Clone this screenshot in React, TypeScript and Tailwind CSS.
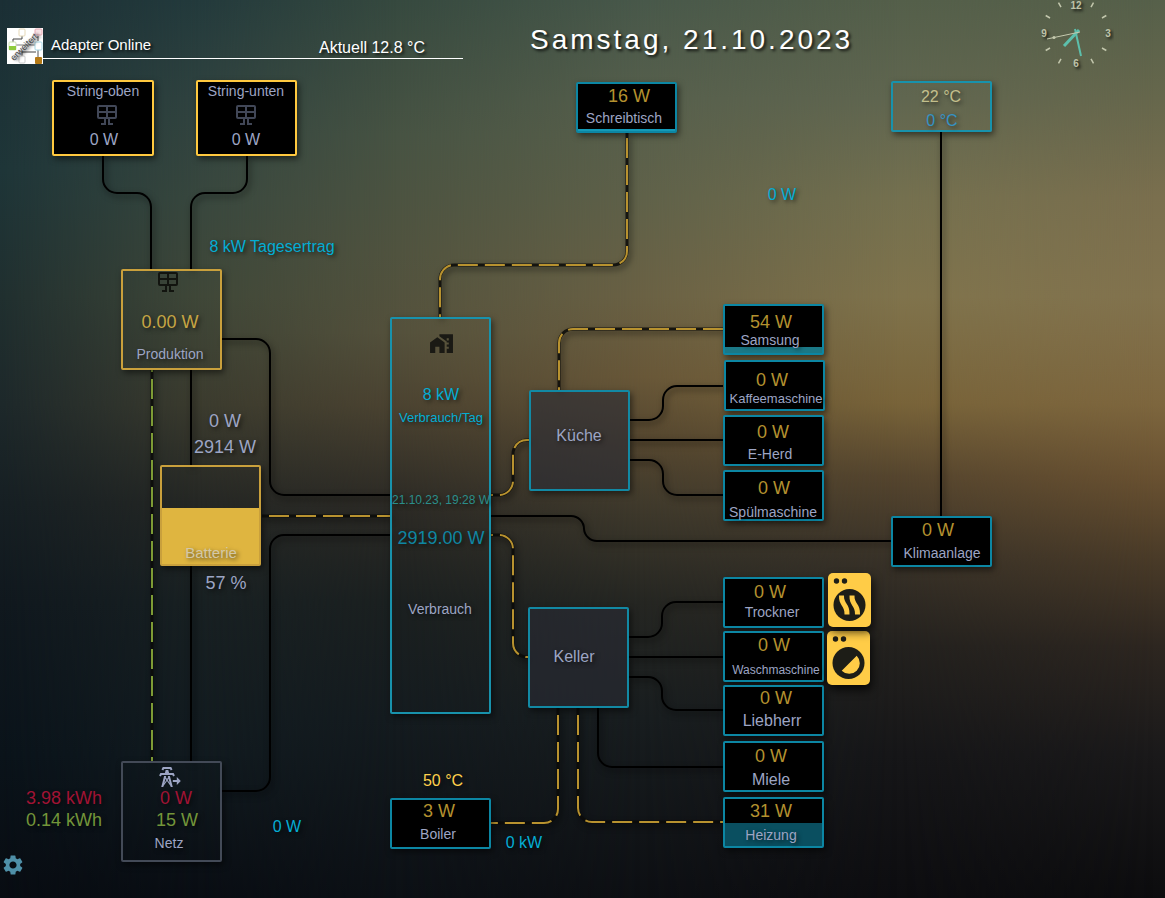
import type { ReactNode } from "react";
import { MdHomeWork, MdSettings } from "react-icons/md";
import clsx from "clsx";

// node and label coordinates are page coordinates, the canvas starts below the header
const HEADER_HEIGHT = 72;

const NODE_STYLE = {
  panel: "border-[#ffc93f] bg-black",
  production: "border-[#c9a03c]",
  battery: "border-[#c9a03c]",
  grid: "border-[#434a57]",
  consumer: "border-[#0c86a3] bg-black",
  open: "border-[#1892ac]",
  room: "border-[#1289a4] bg-[#292b36]/60",
};

type Node = {
  id: string;
  x: number;
  y: number;
  w?: number;
  h?: number;
  kind: keyof typeof NODE_STYLE;
  fill?: number;
  fillClass?: string;
};

const NODES: Node[] = [
  { id: "string-oben", x: 52, y: 80, w: 102, h: 76, kind: "panel" },
  { id: "string-unten", x: 196, y: 80, h: 76, kind: "panel" },
  { id: "schreibtisch", x: 576, y: 82, kind: "consumer", fill: 2, fillClass: "bg-[#149ab8]" },
  { id: "klima-temp", x: 891, y: 81, kind: "open" },
  { id: "produktion", x: 121, y: 269, h: 101, kind: "production" },
  { id: "batterie", x: 160, y: 465, h: 101, kind: "battery", fill: 56, fillClass: "bg-[#dfb540]" },
  { id: "netz", x: 121, y: 761, h: 101, kind: "grid" },
  { id: "verbrauch", x: 390, y: 317, h: 397, kind: "open" },
  { id: "kueche", x: 529, y: 390, h: 101, kind: "room" },
  { id: "keller", x: 528, y: 607, h: 101, kind: "room" },
  { id: "boiler", x: 390, y: 798, kind: "consumer" },
  { id: "samsung", x: 723, y: 304, kind: "consumer", fill: 6, fillClass: "bg-[#1b7886]" },
  { id: "kaffeemaschine", x: 724, y: 360, kind: "consumer" },
  { id: "e-herd", x: 723, y: 415, kind: "consumer" },
  { id: "spuelmaschine", x: 723, y: 470, kind: "consumer" },
  { id: "trockner", x: 723, y: 577, kind: "consumer" },
  { id: "waschmaschine", x: 723, y: 631, kind: "consumer" },
  { id: "liebherr", x: 723, y: 685, kind: "consumer" },
  { id: "miele", x: 723, y: 741, kind: "consumer" },
  { id: "heizung", x: 723, y: 797, kind: "consumer", fill: 23, fillClass: "bg-[#0a4f60]" },
  { id: "klimaanlage", x: 891, y: 516, kind: "consumer" },
];

const TONE = {
  name: "text-[#9da5c4]",
  value: "text-[#b3912f]",
  gold: "text-[#c6a544]",
  bright: "text-[#ffd04c]",
  cyan: "text-[#04add4]",
  teal: "text-[#0f86a2]",
  date: "text-[#2b8e8a]",
  red: "text-[#a01334]",
  green: "text-[#73953a]",
  warm: "text-[#c3bf8c]",
  blue: "text-[#3592c4]",
  battery: "text-[#d3c8a8]",
};

const SIZE = {
  12: "text-[12px]",
  13: "text-[13px]",
  14: "text-[14px]",
  15: "text-[15px]",
  16: "text-[16px]",
  18: "text-[18px]",
};

type LabelItem = [text: string, x: number, y: number, size: keyof typeof SIZE, tone: keyof typeof TONE];

const LABELS: LabelItem[] = [
  ["String-oben", 103, 91, 14, "name"],
  ["0 W", 104, 140, 16, "name"],
  ["String-unten", 246, 91, 14, "name"],
  ["0 W", 246, 140, 16, "name"],
  ["16 W", 629, 96, 18, "value"],
  ["Schreibtisch", 624, 118, 14, "name"],
  ["22 °C", 941, 97, 16, "warm"],
  ["0 °C", 942, 121, 16, "blue"],
  ["0 W", 782, 195, 16, "cyan"],
  ["8 kW Tagesertrag", 272, 247, 16, "cyan"],
  ["0.00 W", 170, 322, 18, "gold"],
  ["Produktion", 170, 354, 14, "name"],
  ["0 W", 225, 421, 18, "name"],
  ["2914 W", 225, 447, 18, "name"],
  ["Batterie", 211, 552, 15, "battery"],
  ["57 %", 226, 583, 18, "name"],
  ["3.98 kWh", 64, 798, 18, "red"],
  ["0.14 kWh", 64, 820, 18, "green"],
  ["0 W", 176, 798, 18, "red"],
  ["15 W", 177, 820, 18, "green"],
  ["Netz", 169, 843, 14, "name"],
  ["0 W", 287, 827, 16, "cyan"],
  ["8 kW", 441, 395, 16, "cyan"],
  ["Verbrauch/Tag", 441, 417, 13, "cyan"],
  ["21.10.23, 19:28 W", 441, 500, 12, "date"],
  ["2919.00 W", 441, 538, 18, "teal"],
  ["Verbrauch", 440, 609, 14, "name"],
  ["Küche", 579, 436, 16, "name"],
  ["Keller", 574, 657, 16, "name"],
  ["54 W", 771, 322, 18, "value"],
  ["Samsung", 770, 340, 14, "name"],
  ["0 W", 772, 380, 18, "value"],
  ["Kaffeemaschine", 776, 398, 13, "name"],
  ["0 W", 773, 432, 18, "value"],
  ["E-Herd", 770, 454, 14, "name"],
  ["0 W", 774, 488, 18, "value"],
  ["Spülmaschine", 773, 512, 14, "name"],
  ["0 W", 770, 592, 18, "value"],
  ["Trockner", 772, 612, 14, "name"],
  ["0 W", 774, 645, 18, "value"],
  ["Waschmaschine", 776, 670, 12, "name"],
  ["0 W", 776, 698, 18, "value"],
  ["Liebherr", 772, 721, 16, "name"],
  ["0 W", 771, 756, 18, "value"],
  ["Miele", 771, 780, 16, "name"],
  ["31 W", 771, 811, 18, "value"],
  ["Heizung", 771, 835, 14, "name"],
  ["50 °C", 443, 781, 16, "bright"],
  ["3 W", 439, 811, 18, "value"],
  ["Boiler", 438, 834, 14, "name"],
  ["0 kW", 524, 843, 16, "cyan"],
  ["0 W", 938, 530, 18, "value"],
  ["Klimaanlage", 942, 553, 14, "name"],
];

const IDLE_LINES = [
  "M103 156 V179 A14 14 0 0 0 117 193 H137 A14 14 0 0 1 151 207 V269",
  "M247 156 V179 A14 14 0 0 1 233 193 H205 A14 14 0 0 0 191 207 V269",
  "M191 370 V465",
  "M191 566 V761",
  "M222 339 H256 A14 14 0 0 1 270 353 V481 A14 14 0 0 0 284 495 H390",
  "M222 791 H256 A14 14 0 0 0 270 777 V549 A14 14 0 0 1 284 535 H390",
  "M491 516 H571 A13 13 0 0 1 584 529 A13 13 0 0 0 597 541 H891",
  "M630 420 H649 A14 14 0 0 0 663 406 V400 A14 14 0 0 1 677 386 H723",
  "M630 440 H723",
  "M630 460 H649 A14 14 0 0 1 663 474 V481 A14 14 0 0 0 677 495 H723",
  "M629 637 H648 A14 14 0 0 0 662 623 V616 A14 14 0 0 1 676 602 H723",
  "M629 657 H723",
  "M629 677 H648 A14 14 0 0 1 662 691 V696 A14 14 0 0 0 676 710 H723",
  "M598 708 V753 A14 14 0 0 0 612 767 H723",
  "M941 132 V516",
];

const ACTIVE_LINES = [
  { d: "M152 370 V761", color: "#7d9b35", offset: 18 },
  { d: "M262 516 H390", color: "#b8922f", offset: 20 },
  { d: "M627 133 V251 A14 14 0 0 1 613 265 H454 A14 14 0 0 0 440 279 V317", color: "#b8922f", offset: 22 },
  { d: "M723 329 H573 A14 14 0 0 0 559 343 V390", color: "#b8922f", offset: 0 },
  { d: "M491 495 H499 A14 14 0 0 0 513 481 V454 A14 14 0 0 1 527 440 H529", color: "#b8922f", offset: 18 },
  { d: "M491 535 H499 A14 14 0 0 1 513 549 V643 A14 14 0 0 0 527 657 H528", color: "#b8922f", offset: 18 },
  { d: "M558 708 V809 A14 14 0 0 1 544 823 H491", color: "#b8922f", offset: 20 },
  { d: "M578 708 V808 A14 14 0 0 0 592 822 H723", color: "#b8922f", offset: 20 },
];

function Backdrop() {
  return (
    <div aria-hidden="true" className="absolute inset-0 -z-10">
      <div className="absolute inset-0 bg-[linear-gradient(#56604a_0%,#66674c_11%,#7a6f4e_22%,#82734e_33%,#7d663e_45%,#695131_53%,#4a3b28_62%,#2d2620_72%,#1a191a_84%,#0c0c0e_100%)]" />
      <div className="absolute inset-0 bg-[linear-gradient(#545f4a_0%,#606650_11%,#74704f_22%,#7f734c_33%,#786339_45%,#55452e_53%,#393228_62%,#23211e_72%,#161618_84%,#0d0d10_100%)] [mask-image:linear-gradient(to_right,#000_77%,transparent_99%)]" />
      <div className="absolute inset-0 bg-[linear-gradient(#48584a_0%,#565f4c_11%,#5f6149_22%,#6a6144_33%,#685738_42%,#54462f_49%,#403a2c_56%,#252622_67%,#181d1f_80%,#0d0f13_100%)] [mask-image:linear-gradient(to_right,#000_55%,transparent_77%)]" />
      <div className="absolute inset-0 bg-[linear-gradient(#36493f_0%,#475343_15%,#50533f_28%,#54513c_37%,#4b4331_45%,#2c2a25_56%,#1b2020_67%,#141b1f_80%,#0c1015_100%)] [mask-image:linear-gradient(to_right,#000_34%,transparent_55%)]" />
      <div className="absolute inset-0 bg-[linear-gradient(#233a3c_0%,#2f423f_11%,#38473e_22%,#3f4738_33%,#3b3b2e_45%,#252724_56%,#182022_67%,#111a1f_84%,#090d13_100%)] [mask-image:linear-gradient(to_right,#000_17%,transparent_34%)]" />
      <div className="absolute inset-0 bg-[linear-gradient(#1b2f35_0%,#1e3538_19%,#202f2f_33%,#1d282a_45%,#161f23_56%,#10181e_67%,#0a131a_84%,#080c12_100%)] [mask-image:linear-gradient(to_right,#000_0%,transparent_17%)]" />
    </div>
  );
}

function AdapterLogo() {
  return (
    <svg viewBox="0 0 36 36" className="size-9 shrink-0 bg-white" aria-hidden="true">
      <g fill="none" strokeWidth="1">
        <path d="M15 8v3M15 28v-4H29" stroke="#444" />
        <path d="M6 14v-3h9" stroke="#444" />
        <path d="M9 17h19" stroke="#aaa" strokeWidth="1.5" />
        <path d="M31 8v5M31 22v7" stroke="#aaa" strokeWidth="2" />
        <rect x="12" y="1" width="6" height="7" rx="1" stroke="#e6d9b8" />
        <rect x="28" y="1" width="7" height="6" rx="1" stroke="#e8a9b4" fill="#f7e3e6" />
        <rect x="2" y="14" width="7" height="8" rx="1" stroke="#cfe3b4" />
        <rect x="28" y="14" width="7" height="8" rx="1" stroke="#a6d8e6" />
        <rect x="12" y="28" width="6" height="7" rx="1" stroke="#ccc" />
      </g>
      <rect x="2" y="18" width="7" height="4" fill="#8ecb3c" />
      <rect x="28" y="29" width="7" height="7" rx="1" fill="#b57a16" />
      <text x="17" y="22" fontSize="9" textAnchor="middle" fill="#444" transform="rotate(-45 17 19)">
        erweitert
      </text>
    </svg>
  );
}

function Clock() {
  const ticks = [30, 60, 120, 150, 210, 240, 300, 330];
  return (
    <svg viewBox="0 0 76 72" className="ml-auto h-18 w-19 shrink-0" role="img" aria-label="19:28">
      <g stroke="#c3c7ad" strokeWidth="1.5">
        {ticks.map((deg) => (
          <path key={deg} d="M38 -2v5" transform={`rotate(${deg} 38 33)`} />
        ))}
      </g>
      <g fill="#bfc3a9" fontSize="10" fontWeight="bold" textAnchor="middle">
        <text x="38" y="9">12</text>
        <text x="70" y="37">3</text>
        <text x="38" y="67">6</text>
        <text x="6" y="37">9</text>
      </g>
      <g stroke="#5cbfac">
        <path d="M41 30L26 46" strokeWidth="3" />
        <path d="M37 29L43 56" strokeWidth="2" />
      </g>
      <path d="M42 32L9 39" stroke="#c5c9ae" strokeWidth="1" />
      <circle cx="16" cy="37.5" r="1.5" fill="#c5c9ae" />
    </svg>
  );
}

function SolarPanel() {
  return (
    <svg viewBox="0 0 20 20" className="size-5" fill="none" stroke="currentColor" strokeWidth="2" aria-hidden="true">
      <rect x="1" y="1" width="18" height="12" rx="1" />
      <path d="M1 7h18M10 1v12M8 13v6H4M12 13v6h4" />
    </svg>
  );
}

function PowerTower() {
  return (
    <svg viewBox="0 0 28 24" className="h-6 w-7" fill="currentColor" aria-hidden="true">
      <path d="M8.28,5.45L6.5,4.55L7.76,2H16.23L17.5,4.55L15.72,5.44L15,4H9L8.28,5.45M18.62,8H14.09L13.3,5H10.7L9.91,8H5.38L4.1,10.55L5.89,11.44L6.62,10H17.38L18.1,11.45L19.89,10.56L18.62,8M17.77,22H15.7L15.46,21.1L12,15.9L8.53,21.1L8.3,22H6.23L9.12,11H11.19L10.83,12.35L12,14.1L13.16,12.35L12.81,11H14.88L17.77,22M11.4,15L10.5,13.65L9.32,18.13L11.4,15M14.68,18.12L13.5,13.64L12.6,15L14.68,18.12Z" />
      <path d="M17.8 15h4v-3l4 4-4 4v-3h-4z" />
    </svg>
  );
}

function Appliance({ children }: { children: ReactNode }) {
  return (
    <svg viewBox="0 0 43 54" className="h-[54px] w-[43px] drop-shadow-[2px_5px_5px_#000000bb]" aria-hidden="true">
      <rect width="43" height="54" rx="5" fill="#ffcc47" />
      <g fill="#1d1d17">
        <circle cx="8.5" cy="8" r="2.7" />
        <circle cx="16.5" cy="8" r="2.7" />
        <circle cx="21.5" cy="32" r="16" />
      </g>
      <g fill="#ffcc47">{children}</g>
    </svg>
  );
}

function Place({ x, y, className, children }: { x: number; y: number; className?: string; children: ReactNode }) {
  return (
    <div className={clsx("absolute", className)} style={{ left: x, top: y - HEADER_HEIGHT }}>
      {children}
    </div>
  );
}

function Connections() {
  return (
    <svg className="absolute inset-0 size-full overflow-visible drop-shadow-[2px_3px_3px_#00000099]" aria-hidden="true">
      <g fill="none" transform={`translate(0 ${-HEADER_HEIGHT})`}>
        {IDLE_LINES.map((d) => (
          <path key={d} d={d} stroke="#000" strokeWidth="2" />
        ))}
        {ACTIVE_LINES.map((line) => (
          <g key={line.d}>
            <path d={line.d} stroke="#0a0a08" strokeWidth="3" strokeOpacity="0.85" />
            <path d={line.d} stroke={line.color} strokeWidth="2" strokeDasharray="20 7" strokeDashoffset={line.offset} />
          </g>
        ))}
      </g>
    </svg>
  );
}

export default function App() {
  return (
    <main className="relative isolate flex min-h-screen flex-col overflow-hidden bg-[#0d0f13] font-['Liberation_Sans',Arial,sans-serif]">
      <Backdrop />

      <header className="flex h-18 shrink-0 items-start pr-[51px] pl-[7px] text-white [text-shadow:2px_2px_3px_#000000cc]">
        <div className="mt-7 flex w-[456px] shrink-0">
          <AdapterLogo />
          <div className="flex h-[31px] flex-1 items-center justify-between border-b border-white pr-[38px] pl-2">
            <span className="pt-1 text-[15px]">Adapter Online</span>
            <span className="pt-[10px] text-[16px]">Aktuell 12.8 °C</span>
          </div>
        </div>
        <h1 className="mt-5 ml-[67px] text-[28px] leading-10 tracking-[3px] whitespace-nowrap">Samstag, 21.10.2023</h1>
        <Clock />
      </header>

      <section className="relative min-h-[826px] flex-1">
        <Connections />

        {NODES.map((node) => (
          <div
            key={node.id}
            className={clsx(
              "absolute flex flex-col justify-end rounded-[2px] border-2 shadow-[2px_3px_6px_#00000080]",
              NODE_STYLE[node.kind]
            )}
            style={{ left: node.x, top: node.y - HEADER_HEIGHT, width: node.w ?? 101, height: node.h ?? 51 }}
          >
            {node.fill && <div className={node.fillClass} style={{ height: node.fill }} />}
          </div>
        ))}

        <Place x={97} y={105} className="text-[#414757]">
          <SolarPanel />
        </Place>
        <Place x={236} y={105} className="text-[#414757]">
          <SolarPanel />
        </Place>
        <Place x={158} y={272} className="text-[#12140f]">
          <SolarPanel />
        </Place>
        <Place x={429} y={331} className="text-[#1a1914]">
          <MdHomeWork size={25} />
        </Place>
        <Place x={155} y={765} className="text-[#9da5c4]">
          <PowerTower />
        </Place>
        <Place x={827} y={631}>
          <Appliance>
            <path d="M14.7 39.7L29.7 24.7A10.6 10.6 0 0 1 14.7 39.7Z" />
          </Appliance>
        </Place>
        <Place x={828} y={573}>
          <Appliance>
            <path d="M11 22.5h5c-.5 8 6 8 5.500 19h-5c.5-9-6-9-5.500-19z" />
            <path d="M21.500 22.500h5c-.5 8 6 8 5.500 19h-5c.5-9-6-9-5.500-19z" />
          </Appliance>
        </Place>

        {LABELS.map(([text, x, y, size, tone]) => (
          <span
            key={`${text}-${x}-${y}`}
            className={clsx(
              "absolute -translate-x-1/2 -translate-y-1/2 leading-none whitespace-nowrap [text-shadow:2px_2px_4px_#00000099]",
              SIZE[size],
              TONE[tone]
            )}
            style={{ left: x, top: y - HEADER_HEIGHT }}
          >
            {text}
          </span>
        ))}

        <Place x={1} y={853}>
          <button type="button" aria-label="Einstellungen" className="block text-[#4f90a8]">
            <MdSettings size={24} />
          </button>
        </Place>
      </section>
    </main>
  );
}
